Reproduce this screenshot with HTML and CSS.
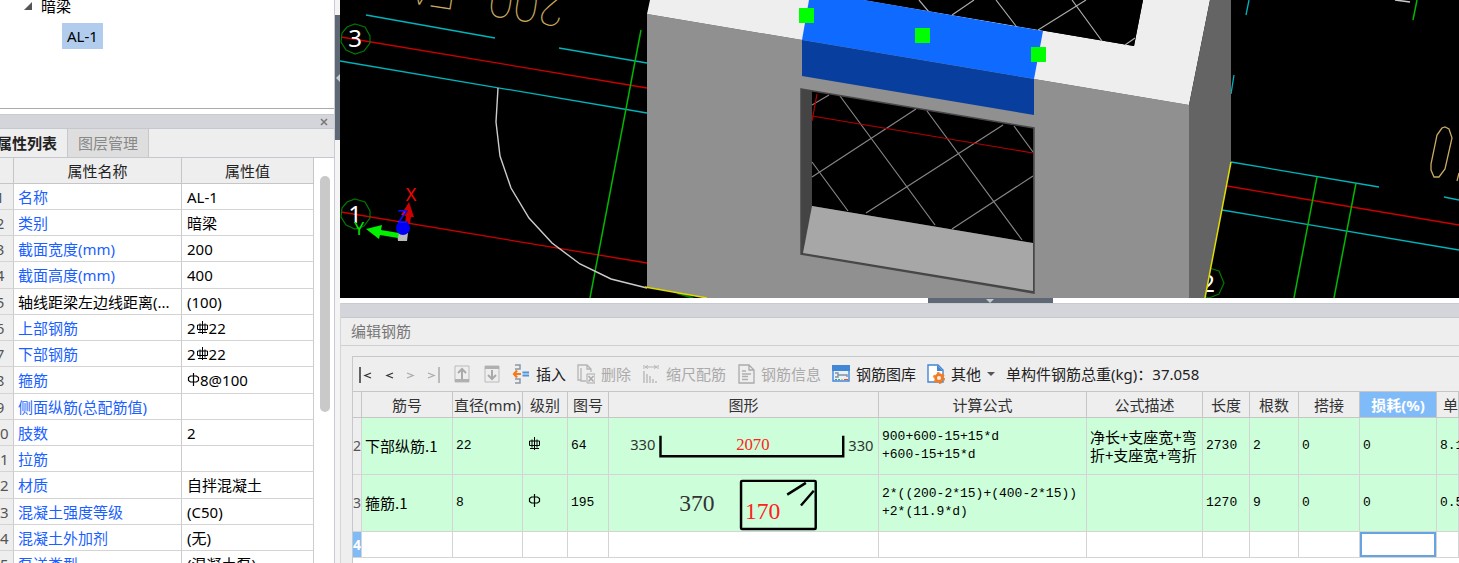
FILE: index.html
```html
<!DOCTYPE html>
<html lang="zh-CN">
<head>
    <meta charset="UTF-8">
    <meta name="viewport" content="width=device-width, initial-scale=1.0">
    <title>编辑钢筋</title>
    <link rel="stylesheet" href="styles.css">
</head>
<body>
<svg class="defs" aria-hidden="true">
    <symbol id="hrb400" viewBox="0 0 13 13">
        <path d="M6.500 0V13M1.500 4V8.500H11.500V4ZM4 2.500V10.500M9 2.500V10.500M2 11.500H11" fill="none" stroke="currentColor"/>
    </symbol>
    <symbol id="hpb300" viewBox="0 0 13 13">
        <path d="M6.500 0V13M3.500 3H9.500L11.500 4.500V7.500L9.500 9H3.500L1.500 7.500V4.500Z" fill="none" stroke="currentColor" stroke-width="1.200"/>
    </symbol>
</svg>

<aside class="side">
    <div class="tree">
        <ul>
            <li><span class="caret"></span>暗梁</li>
            <li><button class="tree-item">AL-1</button></li>
        </ul>
    </div>
    <div class="titlebar"><button class="close" aria-label="关闭"><svg width="8" height="8"><path d="M1 1L7 7M7 1L1 7" stroke="#777" stroke-width="1.500"/></svg></button></div>
    <div class="tabs">
        <button class="tab active">属性列表</button>
        <button class="tab">图层管理</button>
    </div>
    <div class="props-wrap">
        <table class="props">
            <colgroup><col class="p-num"><col><col class="p-val"></colgroup>
            <thead><tr><th></th><th>属性名称</th><th>属性值</th></tr></thead>
            <tbody>
                <tr><td>1</td><td>名称</td><td>AL-1</td></tr>
                <tr><td>2</td><td>类别</td><td>暗梁</td></tr>
                <tr><td>3</td><td>截面宽度(mm)</td><td>200</td></tr>
                <tr><td>4</td><td>截面高度(mm)</td><td>400</td></tr>
                <tr><td>5</td><td class="plain">轴线距梁左边线距离(...</td><td>(100)</td></tr>
                <tr><td>6</td><td>上部钢筋</td><td>2<svg class="sym"><use href="#hrb400"/></svg>22</td></tr>
                <tr><td>7</td><td>下部钢筋</td><td>2<svg class="sym"><use href="#hrb400"/></svg>22</td></tr>
                <tr><td>8</td><td>箍筋</td><td><svg class="sym"><use href="#hpb300"/></svg>8@100</td></tr>
                <tr><td>9</td><td>侧面纵筋(总配筋值)</td><td></td></tr>
                <tr><td>10</td><td>肢数</td><td>2</td></tr>
                <tr><td>11</td><td>拉筋</td><td></td></tr>
                <tr><td>12</td><td>材质</td><td>自拌混凝土</td></tr>
                <tr><td>13</td><td>混凝土强度等级</td><td>(C50)</td></tr>
                <tr><td>14</td><td>混凝土外加剂</td><td>(无)</td></tr>
                <tr><td>15</td><td>泵送类型</td><td>(混凝土泵)</td></tr>
            </tbody>
        </table>
        <div class="scroll"><div class="thumb"></div></div>
    </div>
</aside>

<div class="splitter-v"><button class="grip-v" aria-label="收起左侧面板"></button></div>

<main class="main">
    <svg class="view" viewBox="340 0 1119 298" role="img" aria-label="三维视图">
        <rect x="340" width="1119" height="298" fill="#000"/>
        <!-- axes and layout lines, left -->
        <text class="note" transform="translate(566 -5) rotate(189)">200</text>
        <text class="note" transform="translate(460 -22) rotate(189)">FA</text>
        <g fill="none" stroke="#00b4bc" stroke-width="1.300">
            <path d="M366 15L495 38M559 48L647 63M340 61L647 113"/>
            <path d="M1249 0L1246 15M1234 75L1231 94M1231 162L1379 187M1222 210L1459 250M1444 197L1459 200"/>
        </g>
        <path d="M341 37L647 88M341 212L647 263M1227 186L1459 225" stroke="#cc0000" stroke-width="1.300"/>
        <path d="M641 30L590 298M1417 0L1413 20M1317 177L1294 298M1356 183L1334 298" stroke="#00b800" stroke-width="1.500"/>
        <path d="M498 88L496 122L500 156L511 188L529 218L552 243L580 264L611 279L647 288" fill="none" stroke="#ccc" stroke-width="1.400"/>
        <path d="M1395 0L1410 2" stroke="#ccc" stroke-width="1.500"/>
        <g fill="none" stroke="#007800" stroke-width="1.200">
            <path d="M355 24L365 27L370 36L370 43L364 51L355 54L346 50L341 42L342 33L347 27Z"/>
            <path d="M355 199L365 202L370 211L370 218L364 226L355 229L346 225L341 217L342 208L347 202Z"/>
            <path d="M1209 268L1219 271L1224 283L1219 294L1209 298L1199 294Z"/>
            <path d="M677 293L693 298" stroke-width="2"/>
        </g>
        <g class="axis-no">
            <text x="355" y="47">3</text>
            <text x="355" y="223">1</text>
            <text x="1208" y="292">2</text>
        </g>
        <path d="M1442 128L1437 135L1431 164L1431 170L1434 177L1439 177L1445 169L1452 138L1449 129L1445 127Z" fill="none" stroke="#c8aa60" stroke-width="1.300"/>
        <path d="M1457 181L1459 173" stroke="#c8aa60" stroke-width="1.300"/>
        <!-- coordinate tripod -->
        <path d="M409 202L414 217H411L410 223H405L406 216L401 215Z" fill="#cc0000"/>
        <path d="M397 233H408L407 241H398Z" fill="#bbb"/>
        <path d="M366 229L382 225L381 230L399 233L398 238L380 235L379 239Z" fill="#00f000"/>
        <circle cx="403" cy="228" r="7" fill="#0000f5"/>
        <g class="tripod">
            <text x="411" y="201" fill="#f00">X</text>
            <text x="359" y="235" fill="#00e000">Y</text>
            <text x="403" y="223" fill="#1010ff">Z</text>
        </g>
        <!-- wall -->
        <path d="M647 14L1189 105V298H707L647 287Z" fill="#909090"/>
        <path d="M650 0L647 14L1189 105L1210 0H1143L1134 46L864 0Z" fill="#eee"/>
        <path d="M1189 105L1210 0H1231V162L1205 298H1189Z" fill="#646464"/>
        <path d="M864 0H1143L1134 46Z" fill="#000"/>
        <path d="M919 0L929 12M974 0L952 15M996 0L1016 26M1086 0L1038 30M1072 0L1102 41M1135 38L1125 45" stroke="#aaa" stroke-width="1.200"/>
        <path d="M1231 162L1205 298M645 287L707 298" stroke="#e0dc00" stroke-width="1.500"/>
        <!-- selected beam -->
        <path d="M809 0H864L1043 31L1034 79L802 40Z" fill="#0f6aff"/>
        <path d="M802 40L1034 79V115L802 76Z" fill="#083f9f"/>
        <!-- opening -->
        <path d="M801 89L1034 128V293L801 254Z" fill="#444"/>
        <path d="M812 91L1033 128V243L812 206Z" fill="#000"/>
        <path d="M812 206L1033 243V291L803 253Z" fill="#a7a7a7"/>
        <path d="M812 105L829 95M840 96L935 225M812 177L916 109M812 162L848 211M866 213L1003 125M927 111L1022 240M1014 126L1033 152M952 229L1033 176" stroke="#858585" stroke-width="1.200"/>
        <path d="M817 94L812 121M812 116L1033 153" stroke="#b80000" stroke-width="1.200"/>
        <path d="M801 89L1034 128V293L801 254Z" fill="none" stroke="#484848" stroke-width="1.500"/>
        <g fill="#00ff00">
            <rect x="799" y="8" width="15" height="15"/>
            <rect x="915" y="28" width="15" height="15"/>
            <rect x="1031" y="47" width="15" height="15"/>
        </g>
    </svg>

    <div class="splitter-h"><button class="grip-h" aria-label="收起下方面板"></button></div>

    <section class="editor">
        <div class="titlebar"></div>
        <h2>编辑钢筋</h2>
        <div class="grid-box">
            <div class="toolbar">
                <div class="nav">
                    <button aria-label="首条"><svg width="14" height="18"><path d="M1 2V18" stroke="#333" stroke-width="1.500"/><path d="M12 8L6 10.500L12 13" fill="none" stroke="#333" stroke-width="1.300"/></svg></button>
                    <button aria-label="上一条"><svg width="9" height="18"><path d="M8 8L2 10.500L8 13" fill="none" stroke="#333" stroke-width="1.300"/></svg></button>
                    <button aria-label="下一条" disabled><svg width="9" height="18"><path d="M1 8L7 10.500L1 13" fill="none" stroke="#aaa" stroke-width="1.300"/></svg></button>
                    <button aria-label="末条" disabled><svg width="14" height="18"><path d="M12 2V18" stroke="#aaa" stroke-width="1.500"/><path d="M1 8L7 10.500L1 13" fill="none" stroke="#aaa" stroke-width="1.300"/></svg></button>
                    <button aria-label="上移" disabled><svg width="18" height="18"><path d="M2 1H16V17H2Z" fill="#eee" stroke="#bbb"/><path d="M2 15.500H16" stroke="#b0b0b0" stroke-width="3"/><path d="M9 14V4M5 8L9 4L13 8" fill="none" stroke="#aaa" stroke-width="2"/></svg></button>
                    <button aria-label="下移" disabled><svg width="18" height="18"><path d="M2 1H16V17H2Z" fill="#eee" stroke="#bbb"/><path d="M2 2.500H16" stroke="#b0b0b0" stroke-width="3"/><path d="M9 5V14M5 10L9 14L13 10" fill="none" stroke="#aaa" stroke-width="2"/></svg></button>
                </div>
                <button><svg width="18" height="20"><path d="M3 1H8V5H3M3 15H8V19H3" fill="none" stroke="#8a98a5" stroke-width="1.500"/><path d="M2 10H9M5 6.500L2 10L5 13.500" fill="none" stroke="#f57a1c" stroke-width="2.200"/><path d="M10.500 8.500H17M10.500 11.500H17" stroke="#4d94dc" stroke-width="2"/></svg>插入</button>
                <button disabled><svg width="18" height="20"><path d="M4 16H1V1H10L14 5V8M10 1V5H14M4 4V17H9" fill="none" stroke="#b5b5b5" stroke-width="1.300"/><path d="M10 10H18V19H10Z" fill="#eee" stroke="#aaa"/><path d="M11.500 12L16.500 17.500M16.500 12L11.500 17.500" stroke="#aaa" stroke-width="1.500"/></svg>删除</button>
                <button disabled><svg width="18" height="20"><path d="M2 1V5M16 1V5M4 3H14M6 1.500L3 3L6 4.500M12 1.500L15 3L12 4.500" fill="none" stroke="#b5b5b5"/><path d="M2 7V19M5 10V19M8 12V19M11 15V19M14 17V19" stroke="#b5b5b5" stroke-width="1.300"/></svg>缩尺配筋</button>
                <button disabled><svg width="18" height="20"><path d="M2 1H12L17 6V19H2ZM12 1V6H17" fill="none" stroke="#aaa" stroke-width="1.300"/><path d="M5 7H9M5 10H14M5 12.500H11M5 15.500H11" stroke="#b0b0b0" stroke-width="1.400"/></svg>钢筋信息</button>
                <button><svg width="18" height="18"><path d="M1 1H17V16H1Z" fill="#e6f1fb" stroke="#4287d6" stroke-width="1.400"/><path d="M0 3H18" stroke="#4287d6" stroke-width="6"/><path d="M3 8H6V12H3M6 10H15V12" fill="none" stroke="#8291a0" stroke-width="1.400"/><path d="M3 14.500H5" stroke="#4287d6"/><path d="M6 14.500H8" stroke="#43b84e"/><path d="M9 14.500H11" stroke="#f4be35"/><path d="M12 14.500H16" stroke="#ef4e3d"/></svg>钢筋图库</button>
                <button><svg width="18" height="20"><path d="M1 1H11L16 6V18H1Z" fill="#fff" stroke="#4287d6" stroke-width="1.400"/><path d="M10 1L16 7H10Z" fill="#4287d6"/><circle cx="12" cy="14" r="3.400" fill="#eee" stroke="#f57a1c" stroke-width="2.600"/><circle cx="12" cy="14" r="5.200" fill="none" stroke="#f57a1c" stroke-width="1.600" stroke-dasharray="2.600 2.850"/></svg>其他<svg width="8" height="5"><path d="M0 0H8L4 4Z" fill="#555"/></svg></button>
                <span class="total">单构件钢筋总重(kg)：37.058</span>
            </div>
            <table class="rebar">
                <colgroup>
                    <col class="c-num"><col class="c-name"><col class="c-dia"><col class="c-grade"><col class="c-code"><col>
                    <col class="c-formula"><col class="c-desc"><col class="c-len"><col class="c-count"><col class="c-lap"><col class="c-loss"><col class="c-unit">
                </colgroup>
                <thead>
                    <tr><th></th><th>筋号</th><th>直径(mm)</th><th>级别</th><th>图号</th><th>图形</th><th>计算公式</th><th>公式描述</th><th>长度</th><th>根数</th><th>搭接</th><th class="current">损耗(%)</th><th class="cut">单</th></tr>
                </thead>
                <tbody>
                    <tr class="filled">
                        <td>2</td><td class="cn">下部纵筋.1</td><td>22</td><td class="grade"><svg class="sym"><use href="#hrb400"/></svg></td><td>64</td>
                        <td class="shape">
                            <svg viewBox="0 0 269 57">
                                <path d="M50 18V39H236V18" fill="none" stroke="#000" stroke-width="2.500"/>
                                <text class="len" x="32" y="33">330</text>
                                <text class="mid" x="144" y="33">2070</text>
                                <text class="len" x="254" y="34">330</text>
                            </svg>
                        </td>
                        <td>900+600-15+15*d<br>+600-15+15*d</td><td class="cn">净长+支座宽+弯<br>折+支座宽+弯折</td><td>2730</td><td>2</td><td>0</td><td>0</td><td>8.1</td>
                    </tr>
                    <tr class="filled">
                        <td>3</td><td class="cn">箍筋.1</td><td>8</td><td class="grade"><svg class="sym"><use href="#hpb300"/></svg></td><td>195</td>
                        <td class="shape">
                            <svg viewBox="0 0 269 57">
                                <rect x="132" y="6" width="76" height="49" rx="1" fill="none" stroke="#000" stroke-width="2.500"/>
                                <path d="M179 20L198 8M193 31L206 16" stroke="#000" stroke-width="2.500"/>
                                <text class="big" x="87" y="37">370</text>
                                <text class="big red" x="154" y="45">170</text>
                            </svg>
                        </td>
                        <td>2*((200-2*15)+(400-2*15))<br>+2*(11.9*d)</td><td></td><td>1270</td><td>9</td><td>0</td><td>0</td><td>0.5</td>
                    </tr>
                    <tr class="empty">
                        <td>4</td><td></td><td></td><td></td><td></td><td></td><td></td><td></td><td></td><td></td><td></td><td class="edit"><input type="text" aria-label="损耗(%)"></td><td></td>
                    </tr>
                </tbody>
            </table>
        </div>
    </section>
</main>
</body>
</html>
```
FILE: styles.css
```css
* {
    box-sizing: border-box;
}

body {
    margin: 0;
    height: 100vh;
    display: flex;
    overflow: hidden;
    background: #fff;
    color: #222;
    font: 15px/20px "Noto Sans", "Noto Sans CJK SC", sans-serif;
}

button {
    border: 0;
    padding: 0;
    background: none;
    color: inherit;
    font: inherit;
}

table {
    border-spacing: 0;
    table-layout: fixed;
}

th {
    font-weight: normal;
}

.defs {
    position: absolute;
    width: 0;
    height: 0;
}

.sym {
    width: 13px;
    height: 13px;
}

/* left side */
.side {
    width: 335px;
    flex: none;
    display: flex;
    flex-direction: column;
    overflow: hidden;
    border-right: 1px solid #c8cbd0;
}

.tree {
    height: 109px;
    flex: none;
    border-bottom: 1px solid #aaa;
    margin-bottom: 5px;
    color: #000;
}

.tree ul {
    list-style: none;
    margin: -7px 0 0;
    padding: 0 0 0 24px;
}

.tree li {
    display: flex;
    align-items: center;
    height: 26px;
    margin-bottom: 4px;
}

.caret {
    width: 8px;
    height: 8px;
    margin-right: 9px;
    background: #555;
    clip-path: polygon(100% 0, 100% 100%, 0 100%);
}

.tree-item {
    height: 26px;
    margin-left: 38px;
    padding: 0 5px;
    background: #b1cced;
}

.titlebar {
    height: 15px;
    flex: none;
    display: flex;
    justify-content: flex-end;
    align-items: center;
    background: #d4d5da;
    border-top: 1px solid #c8cbd0;
    border-bottom: 1px solid #c3c9ce;
}

.close {
    display: flex;
    margin-right: 6px;
}

.tabs {
    height: 28px;
    flex: none;
    display: flex;
    background: #eee;
}

.tab {
    padding: 0 10px;
    border-right: 1px solid #c3c9ce;
    background: #dedede;
    color: #888;
}

.tab.active {
    margin-left: -13px;
    background: #eee;
    color: #222;
    font-weight: bold;
}

.props-wrap {
    display: flex;
    flex: 1;
    min-height: 0;
    margin-left: -13px;
    border-top: 1px solid #c3c9ce;
}

.props {
    flex: 1;
    align-self: flex-start;
}

.p-num {
    width: 27px;
}

.p-val {
    width: 132px;
}

.props th,
.props td {
    height: 26px;
    padding: 0 4px;
    border-right: 1px solid #ccc;
    border-bottom: 1px solid #d4d4d4;
    white-space: nowrap;
}

.props th {
    background: #eee;
    border-color: #c6c6c6;
}

.props tr:nth-child(4n) td {
    height: 27px;
}

.props td:first-child {
    padding: 0;
    background: #eee;
    color: #555;
    text-align: center;
}

.props td:nth-child(2) {
    color: #1a5fff;
}

.props td:nth-child(3),
.props td.plain {
    color: #000;
}

.props td:nth-child(3) {
    padding-left: 5px;
}

.scroll {
    width: 20px;
    padding: 18px 4px 0 6px;
}

.thumb {
    height: 236px;
    border-radius: 5px;
    background: #c9c9c9;
}

.splitter-v {
    width: 5px;
    flex: none;
    padding-top: 15px;
    background: #f4f4f4;
}

.grip-v,
.grip-h {
    display: flex;
    align-items: center;
    justify-content: center;
    background: #5f6975;
}

.grip-v {
    width: 5px;
    height: 125px;
}

.grip-v::before {
    content: "";
    border: 4px solid transparent;
    border-left: 0;
    border-right-color: #c4c9cf;
}

/* right side */
.main {
    flex: 1;
    min-width: 0;
    display: flex;
    flex-direction: column;
    overflow: hidden;
}

.view {
    display: block;
    width: 100%;
    flex: none;
}

.axis-no {
    fill: #fff;
    font-size: 24px;
    text-anchor: middle;
}

.tripod {
    font-size: 18px;
    text-anchor: middle;
}

.note {
    fill: #c8aa60;
    font: 100 46px Roboto, sans-serif;
}

.splitter-h {
    height: 5px;
    flex: none;
    display: flex;
    justify-content: center;
    padding-left: 181px;
}

.grip-h {
    width: 125px;
    height: 5px;
}

.grip-h::before {
    content: "";
    border: 4px solid transparent;
    border-bottom: 0;
    border-top-color: #c4c9cf;
}

.editor {
    flex: 1;
    display: flex;
    flex-direction: column;
    background: #eee;
    border-left: 1px solid #d4d5da;
}

.editor h2 {
    margin: 0;
    height: 28px;
    padding-left: 10px;
    border-bottom: 1px solid #cfd0d2;
    color: #777;
    font-size: 15px;
    font-weight: normal;
    line-height: 27px;
}

.grid-box {
    flex: 1;
    margin: 10px 0 0 11px;
    border: solid #c6c9cc;
    border-width: 1px 0 0 1px;
    background: #fff;
}

.toolbar,
.nav,
.toolbar button {
    display: flex;
    align-items: center;
}

.toolbar {
    height: 34px;
    gap: 11px;
    padding-left: 6px;
    background: #eee;
    white-space: nowrap;
}

.nav {
    gap: 12px;
}

.toolbar button {
    gap: 6px;
}

.toolbar button:disabled {
    color: #aaa;
}

.rebar {
    width: 100%;
    color: #000;
    border-top: 1px solid #c6c6c6;
}

.c-num { width: 9px; }
.c-name { width: 91px; }
.c-dia { width: 70px; }
.c-grade { width: 45px; }
.c-code { width: 41px; }
.c-formula { width: 208px; }
.c-desc { width: 116px; }
.c-len { width: 47px; }
.c-count { width: 49px; }
.c-lap { width: 61px; }
.c-loss { width: 77px; }
.c-unit { width: 22px; }

.rebar th {
    height: 26px;
    padding: 0;
    background: #eee;
    color: #333;
    border-right: 1px solid #c6c6c6;
    border-bottom: 1px solid #c6c6c6;
    white-space: nowrap;
}

.rebar th.current {
    background: #80bbf9;
    color: #fff;
    font-weight: bold;
}

.rebar th.cut {
    padding-left: 6px;
}

.rebar td {
    height: 57px;
    padding: 0 3px;
    border-right: 1px solid #d4d4d4;
    border-bottom: 1px solid #d4d4d4;
    font: 13px/18px "Liberation Mono", "Noto Sans CJK SC", monospace;
    white-space: nowrap;
}

.rebar td.cn {
    font: 15px/18px "Noto Sans CJK SC", sans-serif;
}

.rebar tr.filled td {
    background: #ccffd9;
}

.rebar tr td:first-child {
    padding: 0;
    background: #eee;
    color: #555;
    font: 14px/18px "Noto Sans", sans-serif;
}

.rebar td.grade {
    padding-left: 5px;
}

.rebar td.shape {
    padding: 0;
}

.shape svg {
    display: block;
    width: 100%;
    height: 56px;
}

.len {
    fill: #333;
    font: 15px "Noto Sans", sans-serif;
    text-anchor: middle;
}

.mid {
    fill: #f22;
    font: 17px "Liberation Serif", serif;
    text-anchor: middle;
}

.big {
    fill: #333;
    font: 24px "Liberation Serif", serif;
    text-anchor: middle;
}

.big.red {
    fill: #f22;
}

.rebar tr.empty td {
    height: 26px;
}

.rebar tr.filled + tr.empty td:first-child {
    background: #80bbf9;
    color: #fff;
    font-weight: bold;
}

.rebar td.edit {
    padding: 0;
}

.edit input {
    display: block;
    width: 100%;
    height: 25px;
    border: 2px solid #66a3e3;
    background: #fff;
}
```
